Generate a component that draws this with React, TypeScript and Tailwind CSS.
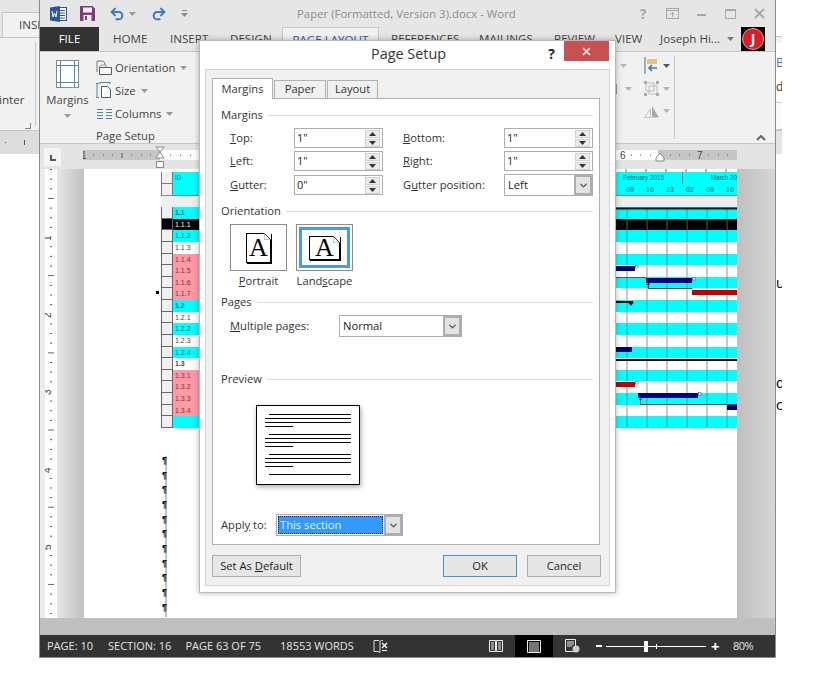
import { ChevronDown, Redo2, Undo2 } from 'lucide-react'

const font = { fontFamily: '"Open Sans", "Noto Sans", sans-serif' }

const rows = [
  { id: '1.1', tone: 'cyan', bold: true },
  { id: '1.1.1', tone: 'black' },
  { id: '1.1.2', tone: 'cyan' },
  { id: '1.1.3', tone: 'white' },
  { id: '1.1.4', tone: 'pink' },
  { id: '1.1.5', tone: 'pink' },
  { id: '1.1.6', tone: 'pink' },
  { id: '1.1.7', tone: 'pink' },
  { id: '1.2', tone: 'cyan', bold: true },
  { id: '1.2.1', tone: 'white' },
  { id: '1.2.2', tone: 'cyan' },
  { id: '1.2.3', tone: 'white' },
  { id: '1.2.4', tone: 'cyan' },
  { id: '1.3', tone: 'white', bold: true },
  { id: '1.3.1', tone: 'pink' },
  { id: '1.3.2', tone: 'pink' },
  { id: '1.3.3', tone: 'pink' },
  { id: '1.3.4', tone: 'pink' },
  { id: '', tone: 'cyan' },
]

const toneClass: Record<string, string> = {
  cyan: 'bg-[#00ffff] text-[#00666c]',
  black: 'bg-black text-white',
  white: 'bg-white text-[#444444]',
  pink: 'bg-[#ff99a4] text-[#7d3040]',
}

function Caret({ className = '' }: { className?: string }) {
  return (
    <svg width="7" height="4" viewBox="0 0 7 4" className={className}>
      <path d="M0 0h7L3.5 4z" fill="currentColor" />
    </svg>
  )
}

function WordIcon() {
  return (
    <svg width="17" height="16" viewBox="0 0 17 16">
      <rect x="6" y="1.5" width="10.5" height="13" fill="#fff" stroke="#2b579a" />
      <path d="M10 4.5h5M10 7h5M10 9.5h5M10 12h5" stroke="#2b579a" />
      <path d="M0 1.5 10 0v16L0 14.5z" fill="#2b579a" />
      <path d="M2 5l1 6 1.5-4 1.5 4 1-6" stroke="#fff" strokeWidth="1" fill="none" />
    </svg>
  )
}

function SaveIcon() {
  return (
    <svg width="15" height="15" viewBox="0 0 15 15">
      <path d="M0 0h12.5L15 2.5V15H0z" fill="#80397b" />
      <rect x="3" y="1.5" width="9" height="5" fill="#f4eef4" />
      <rect x="3.5" y="9" width="8" height="6" fill="#f4eef4" />
      <rect x="5" y="10" width="2" height="4" fill="#80397b" />
    </svg>
  )
}

function MarginsIcon() {
  return (
    <svg width="23" height="28" viewBox="0 0 23 28" className="mx-auto">
      <rect x="0.5" y="0.5" width="22" height="27" fill="#fff" stroke="#7d8b96" />
      <path d="M4.5 1v26M18.5 1v26M1 5.5h21M1 22.5h21" stroke="#4f87a8" />
    </svg>
  )
}

function OrientationIcon() {
  return (
    <svg width="16" height="16" viewBox="0 0 16 16">
      <path d="M1 12V1h6l2 2v2" fill="none" stroke="#777" />
      <path d="M3.5 7.5h12v7h-12z" fill="#fff" stroke="#555" />
      <path d="M3 7l2-2h5v2" fill="none" stroke="#999" />
    </svg>
  )
}

function SizeIcon() {
  return (
    <svg width="16" height="17" viewBox="0 0 16 17">
      <path d="M1 1v15M0 1.5h3M0 15.5h3M4 0.5h10M4 0v2M14 0v2" stroke="#4f87a8" fill="none" />
      <path d="M5.5 4.5h6l3 3v8h-9z" fill="#fff" stroke="#555" />
    </svg>
  )
}

function ColumnsIcon() {
  return (
    <svg width="15" height="12" viewBox="0 0 15 12">
      <path d="M0 1.5h6M0 4.5h6M0 7.5h6M0 10.5h6M9 1.5h6M9 4.5h6M9 7.5h6M9 10.5h6" stroke="#4f87a8" />
    </svg>
  )
}

function RibbonRow({ icon, label }: { icon: React.ReactNode; label: string }) {
  return (
    <div className="flex h-[23px] items-center gap-[3px]">
      <span className="flex w-[16px] justify-center">{icon}</span>
      <span className="text-[11.3px] leading-none text-[#444444]">{label}</span>
      <Caret className="ml-[2px] text-[#999999]" />
    </div>
  )
}

function WindowButtons() {
  return (
    <div className="ml-auto flex h-full items-center text-[#a8a8a8]">
      <span className="w-[12px] text-center text-[14px] font-bold">?</span>
      <svg width="13" height="11" viewBox="0 0 13 11" className="ml-[17px]">
        <rect x="0.5" y="0.5" width="12" height="10" fill="none" stroke="currentColor" />
        <path d="M1 2.5h11M6.5 9V4.5M4.5 6.5l2-2 2 2" fill="none" stroke="currentColor" />
      </svg>
      <svg width="9" height="2" viewBox="0 0 9 2" className="ml-[18px] mt-[2px]">
        <rect width="9" height="2" fill="currentColor" />
      </svg>
      <svg width="11" height="10" viewBox="0 0 11 10" className="ml-[19px]">
        <path d="M0.5 1.5h10v8h-10z" fill="none" stroke="currentColor" />
        <rect width="11" height="2" fill="currentColor" />
      </svg>
      <svg width="11" height="11" viewBox="0 0 11 11" className="ml-[18px] mr-[10px]">
        <path d="M1 1l9 9M10 1l-9 9" stroke="currentColor" strokeWidth="2" />
      </svg>
    </div>
  )
}

function TitleBar() {
  return (
    <div className="flex h-[27px] items-center bg-[#e6e6e6] pl-[10px]">
      <WordIcon />
      <span className="ml-[13px]">
        <SaveIcon />
      </span>
      <Undo2 className="ml-[14px] h-[16px] w-[16px] text-[#3a7cc0]" strokeWidth={3} />
      <Caret className="ml-[4px] text-[#999999]" />
      <Redo2 className="ml-[15px] h-[16px] w-[16px] text-[#3a7cc0]" strokeWidth={3} />
      <span className="ml-[14px] flex flex-col items-center gap-[2px] text-[#888888]">
        <span className="h-px w-[5px] bg-current" />
        <Caret />
      </span>
      <span className="ml-[109px] text-[11.4px] text-[#8d8d8d]">Paper (Formatted, Version 3).docx - Word</span>
      <WindowButtons />
    </div>
  )
}

function TabBar() {
  return (
    <div className="flex h-[24px] items-center whitespace-nowrap bg-[#e6e6e6] text-[11.6px] text-[#444444]">
      <div className="flex h-full w-[59px] items-center justify-center bg-[#333333] text-white">FILE</div>
      <span className="ml-[14px] w-[35px]">HOME</span>
      <span className="ml-[22px] w-[38px]">INSERT</span>
      <span className="ml-[22px] w-[40px]">DESIGN</span>
      <div className="ml-[12px] flex h-full w-[97px] items-center justify-center border border-b-0 border-[#c6c6c6] bg-[#f1f1f1] text-[#2b579a]">
        PAGE LAYOUT
      </div>
      <span className="ml-[12px] w-[67px]">REFERENCES</span>
      <span className="ml-[21px] w-[54px]">MAILINGS</span>
      <span className="ml-[21px] w-[40px]">REVIEW</span>
      <span className="ml-[21px] w-[27px]">VIEW</span>
      <span className="ml-auto">Joseph Hi...</span>
      <Caret className="ml-[7px] text-[#777777]" />
      <div className="ml-[7px] mr-[10px] flex h-full w-[24px] items-center justify-center bg-black">
        <div className="flex h-[22px] w-[22px] items-center justify-center rounded-full border border-[#f0a0a0] bg-[#d81e24] text-[14px] font-bold leading-none text-white">
          J
        </div>
      </div>
    </div>
  )
}

function Ribbon() {
  return (
    <div className="flex h-[93px] border-y border-[#c6c6c6] bg-[#f1f1f1] pt-[4px]">
      <div className="ml-[5px] w-[45px] pt-[4px] text-center">
        <MarginsIcon />
        <div className="mt-[6px] text-[11.3px] leading-none text-[#444444]">Margins</div>
        <Caret className="mx-auto mt-[9px] text-[#999999]" />
      </div>
      <div className="ml-[6px]">
        <RibbonRow icon={<OrientationIcon />} label="Orientation" />
        <RibbonRow icon={<SizeIcon />} label="Size" />
        <RibbonRow icon={<ColumnsIcon />} label="Columns" />
        <div className="mt-[4px] text-[11.3px] leading-[14px] text-[#444444]">Page Setup</div>
      </div>
      <div className="ml-auto flex w-[59px] flex-col gap-[7px] pt-[1px] text-[#b4b4b4]">
        <div className="flex items-center">
          <span className="flex w-[29px] pl-[5px]">
            <Caret />
          </span>
          <svg width="14" height="17" viewBox="0 0 14 17">
            <path d="M1 0v17" stroke="#666" />
            <rect x="3" y="2" width="10" height="5" fill="#e8c27e" />
            <path d="M13 11H5M8 8l-3 3 3 3" fill="none" stroke="#2f74b5" strokeWidth="1.5" />
          </svg>
          <Caret className="ml-[5px] text-[#555555]" />
        </div>
        <div className="flex items-center">
          <span className="flex w-[29px] items-center gap-[8px]">
            <span className="h-[10px] w-[2px] bg-[#999999]" />
            <Caret />
          </span>
          <svg width="15" height="15" viewBox="0 0 15 15">
            <path d="M2 2h8v8H2zM5 5h8v8H5z" fill="none" stroke="#bbb" />
            <path d="M0 0h3v3H0zM12 0h3v3h-3zM0 12h3v3H0zM12 12h3v3h-3z" fill="#aaa" />
          </svg>
          <Caret className="ml-[4px]" />
        </div>
        <div className="flex items-center">
          <span className="w-[29px]" />
          <svg width="15" height="15" viewBox="0 0 15 15">
            <path d="M0.5 14.5 6.5 6v8.5z" fill="#f4f4f4" stroke="#bbb" />
            <path d="M8 3l7 11.5H8z" fill="#aaa" />
          </svg>
          <Caret className="ml-[4px]" />
        </div>
      </div>
      <div className="mb-[4px] w-px bg-[#c6c6c6]" />
      <div className="flex w-[100px] items-end justify-end pb-[2px] pr-[9px]">
        <svg width="10" height="6" viewBox="0 0 10 6">
          <path d="M1 5l4-4 4 4" fill="none" stroke="#666" strokeWidth="2" />
        </svg>
      </div>
    </div>
  )
}

function HorizontalRuler() {
  const dots = [93, 103, 112, 131, 141, 150, 170, 180, 190, 631, 640, 650, 670, 679, 689, 708, 718, 727]
  return (
    <div className="flex h-[25px] items-center bg-[#e4e4e4] pl-[4px]">
      <div className="flex h-[18px] w-[17px] items-center justify-center bg-[#f4f4f4]">
        <div className="h-[6px] w-[6px] translate-y-[1px] border-b-2 border-l-2 border-[#555555]" />
      </div>
      <svg width="654" height="25" viewBox="83 144 654 25" className="ml-[22px]">
        <rect x="83" y="150" width="654" height="10" fill="#c6c6c6" />
        <rect x="160" y="150" width="498" height="10" fill="#fff" />
        <text x="81" y="159" fontSize="10" fill="#444" fontFamily="Liberation Sans">1</text>
        <text x="620" y="159" fontSize="10" fill="#444" fontFamily="Liberation Sans">6</text>
        <text x="697" y="159" fontSize="10" fill="#444" fontFamily="Liberation Sans">7</text>
        {dots.map((x) => (
          <rect key={x} x={x} y="154.5" width="1" height="1" fill="#555" />
        ))}
        <path d="M122 153v5" stroke="#555" />
        <path d="M156 147h8l-4 5 4 6h-8l4-6z" fill="#fff" stroke="#888" />
        <rect x="156.5" y="161.5" width="7" height="6" fill="#fff" stroke="#888" />
        <path d="M660 153l4 5v3h-8v-3z" fill="#fff" stroke="#888" />
      </svg>
    </div>
  )
}

function VerticalRuler() {
  const ticks = Array.from({ length: 47 }, (_, i) => 169.5 + i * 9.65)
  return (
    <svg width="12" height="449" viewBox="45 169 12 449" className="bg-white">
      {ticks.map((y, i) => {
        const mark = Math.round((y - 160) / 9.65)
        if (mark % 8 === 0) return null
        return mark % 4 === 0 ? (
          <path key={i} d={`M48 ${y}h6`} stroke="#666" />
        ) : (
          <path key={i} d={`M50 ${y}h2`} stroke="#555" />
        )
      })}
      {[
        [237, '1'],
        [314, '2'],
        [391, '3'],
        [469, '4'],
        [546, '5'],
      ].map(([y, n]) => (
        <text
          key={n}
          x="47"
          y={y}
          fontSize="10"
          fill="#444"
          fontFamily="Liberation Sans"
          transform={`rotate(-90 51 ${y})`}
        >
          {n}
        </text>
      ))}
    </svg>
  )
}

function GanttBars() {
  return (
    <svg width="121" height="221" viewBox="616 207 121 221" className="absolute right-0 top-[35px]">
      <path d="M627 207v221M647 207v221M667 207v221M687 207v221M707 207v221M727 207v221" stroke="#777" strokeOpacity="0.8" />
      <rect x="616" y="207.5" width="121" height="2" fill="#111" />
      <rect x="616" y="266" width="19" height="5" fill="#000080" />
      <rect x="635.5" y="265.5" width="2.5" height="2.5" fill="#fff" stroke="#555" strokeWidth="0.6" />
      <path d="M616 277.5h30" stroke="#555" />
      <rect x="646" y="278" width="46" height="5" fill="#000080" />
      <rect x="692.5" y="277.5" width="2.5" height="2.5" fill="#fff" stroke="#555" strokeWidth="0.6" />
      <path d="M648.5 283v5.5h44" fill="none" stroke="#444" />
      <path d="M647 285h3l-1.500-2z" fill="#000" />
      <rect x="692" y="290" width="45" height="5" fill="#c00000" />
      <rect x="616" y="301" width="17" height="2" fill="#000" />
      <path d="M628 302h6l-3 4z" fill="#000" />
      <rect x="616" y="347" width="16" height="5" fill="#000080" />
      <rect x="616" y="359" width="121" height="2" fill="#000" />
      <rect x="616" y="382" width="19" height="5" fill="#c00000" />
      <rect x="635.5" y="381.5" width="2.5" height="2.5" fill="#fff" stroke="#555" strokeWidth="0.6" />
      <rect x="638" y="393" width="60" height="5" fill="#000080" />
      <rect x="698.500" y="392.500" width="2.500" height="2.500" fill="#fff" stroke="#555" strokeWidth="0.6" />
      <path d="M640.5 398v6.5H737" fill="none" stroke="#444" />
      <path d="M639 400h3l-1.500-2z" fill="#000" />
      <rect x="727" y="405" width="10" height="5" fill="#000080" />
    </svg>
  )
}

function GanttTable() {
  const tinyFont = { fontFamily: '"Liberation Sans", sans-serif' }
  return (
    <div className="relative ml-[77px] mt-[3px]" style={tinyFont}>
      <svg width="121" height="3" viewBox="616 169 121 3" className="absolute right-0 top-[-3px]">
        <path d="M626 169v3M646 169v3M666 169v3M686 169v3M706 169v3M726 169v3" stroke="#666" />
      </svg>
      <div className="flex h-[24px] border-b border-[#888888] bg-[#00ffff] text-[6.3px] text-[#00666c]">
        <div className="w-[12px] border-x border-[#777777] bg-[#f0f0f0]">
          <div className="mt-[11px] border-t border-[#777777]" />
        </div>
        <div className="pl-[2px] pt-[1px]">ID</div>
        <div className="ml-auto w-[121px] overflow-hidden text-[7px]">
          <div className="flex h-[12px] items-center whitespace-nowrap pl-[7px] text-[6.3px]">
            <span className="w-[60px]">February 2015</span>
            <span className="h-[12px] w-px bg-[#557777]" />
            <span className="ml-[28px]">March 20</span>
          </div>
          <div className="flex h-[12px] items-center pl-[4px]">
            {['09', '16', '23', '02', '09', '16'].map((d, i) => (
              <span key={i} className="w-[20px] shrink-0 text-center">
                {d}
              </span>
            ))}
          </div>
        </div>
      </div>
      <div className="h-[11px] bg-[#eeeeee]" />
      <div className="flex flex-col">
        {rows.map((row, i) => (
          <div key={i} className="flex h-[11.63px] overflow-hidden">
            <div
              className={`w-[12px] border-x border-b border-[#666666] ${row.tone === 'black' ? 'bg-black' : 'bg-[#f0f0f0]'}`}
            />
            <div
              className={`w-[40px] pl-[2px] text-[7px] leading-[11px] ${toneClass[row.tone]} ${row.bold ? 'font-bold' : ''}`}
            >
              {row.id}
            </div>
            <div
              className={`flex-1 ${row.tone === 'black' ? 'bg-black' : i % 2 === 0 ? 'bg-[#00ffff]' : 'bg-white'}`}
            />
          </div>
        ))}
      </div>
      <GanttBars />
      <div className="absolute left-[-5px] top-[119px] h-[3px] w-[3px] bg-black" />
    </div>
  )
}

function Document() {
  return (
    <div className="flex h-[449px]">
      <div className="w-[5px] bg-[#ececec]" />
      <VerticalRuler />
      <div className="w-[27px] bg-gradient-to-r from-[#e6e6e6] to-[#c0c0c0]" />
      <div className="h-full w-[653px] overflow-hidden bg-white">
        <GanttTable />
        <div className="ml-[81px] mt-[28px] flex w-[2px] flex-col bg-[#c4c4c4]">
          {Array.from({ length: 11 }).map((_, i) => (
            <div
              key={i}
              className="ml-[-3px] h-[14.7px] text-[9px] font-bold leading-[9px] text-black"
              style={{ fontFamily: '"Liberation Sans", sans-serif' }}
            >
              ¶
            </div>
          ))}
        </div>
      </div>
      <div className="flex-1 bg-gradient-to-r from-[#bfbfbf] to-[#d6d6d6]" />
    </div>
  )
}

function StatusBar() {
  return (
    <div className="flex h-[22px] items-center bg-[#333333] text-[11px] text-[#e4e4e4]">
      <span className="ml-[7px]">PAGE: 10</span>
      <span className="ml-[15px]">SECTION: 16</span>
      <span className="ml-[14px]">PAGE 63 OF 75</span>
      <span className="ml-[19px]">18553 WORDS</span>
      <svg width="15" height="14" viewBox="0 0 15 14" className="ml-[19px]">
        <path d="M6 1.500H1v11h4l2 1V2.500zM7 2.500c1-1 1.500-1 3-1" fill="none" stroke="#ddd" />
        <path d="M9 4l5 5M14 4l-5 5M9 11.500h5" stroke="#fff" strokeWidth="1.2" />
      </svg>
      <svg width="14" height="14" viewBox="0 0 14 14" className="ml-auto">
        <path d="M0.500 1.500h6v11h-6zM7.500 1.500h6v11h-6zM2 4h3M2 6h3M2 8h3M2 10h3M9 4h3M9 6h3M9 8h3M9 10h3" fill="none" stroke="#eee" />
      </svg>
      <div className="ml-[12px] flex h-[22px] w-[38px] items-center justify-center bg-black">
        <svg width="14" height="13" viewBox="0 0 14 13">
          <path d="M0.500 0.500h13v12h-13zM2 3h10M2 5h10M2 7h10M2 9h10M2 11h10" fill="none" stroke="#eee" />
        </svg>
      </div>
      <svg width="15" height="14" viewBox="0 0 15 14" className="ml-[12px]">
        <path d="M0.500 0.500h10v12h-10zM2 3h7M2 5h7M2 7h5" fill="none" stroke="#eee" />
        <circle cx="11" cy="10" r="3.500" fill="#ccc" />
      </svg>
      <span className="ml-[16px] h-[2px] w-[6px] bg-white" />
      <div className="relative ml-[4px] h-px w-[100px] bg-white">
        <span className="absolute left-[38px] top-[-5px] h-[11px] w-[4px] bg-white" />
        <span className="absolute left-[50px] top-[-2px] h-[5px] w-px bg-white" />
      </div>
      <span className="ml-[5px] w-[8px] text-center text-[15px] font-bold leading-none text-white">+</span>
      <span className="ml-[14px] mr-[20px] w-[22px] tracking-[-0.5px]">80%</span>
    </div>
  )
}

function Spinner() {
  return (
    <div className="mr-[2px] flex w-[15px] flex-col gap-px text-[#333333]">
      <span className="flex h-[8px] items-center justify-center border border-[#d0d0d0] bg-[#ececec]">
        <Caret className="rotate-180" />
      </span>
      <span className="flex h-[8px] items-center justify-center border border-[#d0d0d0] bg-[#ececec]">
        <Caret />
      </span>
    </div>
  )
}

function NumberField({ value }: { value: string }) {
  return (
    <div className="flex h-[20px] items-center border border-[#adadad] bg-white pl-[2px] text-[11px] text-[#222222]">
      <span className="flex-1">{value}</span>
      <Spinner />
    </div>
  )
}

function SelectField({ value, className = '', active = false }: { value: string; className?: string; active?: boolean }) {
  return (
    <div className={`flex h-[22px] items-stretch border border-[#adadad] bg-white text-[11.2px] text-[#222222] ${className}`}>
      {active ? (
        <div className="m-px flex flex-1 items-center border border-dotted border-[#222222] bg-[#3399ff] pl-[1px] text-[#eaf4ff]">
          {value}
        </div>
      ) : (
        <span className="flex flex-1 items-center pl-[3px]">{value}</span>
      )}
      <span className="flex w-[18px] items-center justify-center border-2 border-[#adadad] bg-[#e3e3e3]">
        <ChevronDown className="h-[11px] w-[11px] text-[#555555]" strokeWidth={3} />
      </span>
    </div>
  )
}

function Heading({ label }: { label: string }) {
  return (
    <div className="flex h-[16px] items-center gap-[5px] pr-[6px]">
      <span className="text-[11.2px] leading-none text-[#333333]">{label}</span>
      <span className="h-px flex-1 bg-[#dcdcdc]" />
    </div>
  )
}

function PageGlyph({ landscape = false }: { landscape?: boolean }) {
  return (
    <div
      className={`relative flex items-center justify-center border border-black bg-white shadow-[1px_1px_0_#000] ${landscape ? 'h-[24px] w-[31px]' : 'h-[30px] w-[25px]'}`}
    >
      <span className="text-[26px] leading-none text-black" style={{ fontFamily: '"Liberation Serif", serif' }}>
        A
      </span>
      <svg width="7" height="7" viewBox="0 0 7 7" className="absolute right-[-1px] top-[-1px]">
        <path d="M0 0h7v7z" fill="#fff" />
        <path d="M0 0l7 7" stroke="#000" strokeWidth="0.8" />
        <path d="M0.500 0v6.500H7" fill="none" stroke="#999" strokeWidth="0.6" />
      </svg>
    </div>
  )
}

function PreviewPage() {
  const group = (last: boolean, key: number) => (
    <div key={key} className="flex flex-col gap-[3px]">
      <span className="ml-[4px] h-px bg-black" />
      {!last && <span className="h-px bg-black" />}
      {!last && <span className="h-px bg-black" />}
      {!last && <span className="h-px w-[28px] bg-black" />}
    </div>
  )
  return (
    <div className="ml-[35px] mt-[18px] flex h-[80px] w-[104px] flex-col gap-[7px] border border-black bg-white py-[8px] pl-[8px] pr-[8px] shadow-[1px_2px_5px_rgba(0,0,0,0.35)]">
      {[false, false, false, true].map((last, i) => group(last, i))}
    </div>
  )
}

function MarginsPanel() {
  return (
    <div className="h-[447px] border border-[#b0b0b0] bg-white pl-[8px] pt-[8px] text-[11.2px] text-[#333333]">
      <Heading label="Margins" />
      <div className="mt-[5px] grid grid-cols-[64px_89px_20px_101px_89px] items-center gap-y-[3px] pl-[9px]">
        <span><u>T</u>op:</span>
        <NumberField value={'1"'} />
        <span />
        <span><u>B</u>ottom:</span>
        <NumberField value={'1"'} />
        <span><u>L</u>eft:</span>
        <NumberField value={'1"'} />
        <span />
        <span><u>R</u>ight:</span>
        <NumberField value={'1"'} />
        <span><u>G</u>utter:</span>
        <NumberField value={'0"'} />
        <span />
        <span>G<u>u</u>tter position:</span>
        <SelectField value="Left" />
      </div>
      <div className="mt-[7px]">
        <Heading label="Orientation" />
      </div>
      <div className="mt-[5px] flex gap-[9px] pl-[9px]">
        <div className="flex w-[57px] flex-col items-center">
          <div className="flex h-[47px] w-[57px] items-center justify-center border border-[#8c8c8c]">
            <PageGlyph />
          </div>
          <span className="mt-[2px] leading-[16px]"><u>P</u>ortrait</span>
        </div>
        <div className="flex w-[57px] flex-col items-center">
          <div className="flex h-[47px] w-[57px] items-center justify-center border border-[#8c8c8c] p-[2px]">
            <div className="flex h-full w-full items-center justify-center border-[3px] border-[#4a9ae0]">
              <PageGlyph landscape />
            </div>
          </div>
          <span className="mt-[2px] leading-[16px]">Land<u>s</u>cape</span>
        </div>
      </div>
      <div className="mt-[5px]">
        <Heading label="Pages" />
      </div>
      <div className="mt-[5px] flex items-center pl-[9px]">
        <span className="w-[109px]"><u>M</u>ultiple pages:</span>
        <SelectField value="Normal" className="w-[123px]" />
      </div>
      <div className="mt-[34px]">
        <Heading label="Preview" />
      </div>
      <PreviewPage />
      <div className="mt-[29px] flex items-center">
        <span className="w-[55px]">Appl<u>y</u> to:</span>
        <SelectField value="This section" active className="w-[127px]" />
      </div>
    </div>
  )
}

function DialogButton({ children, className = '' }: { children: React.ReactNode; className?: string }) {
  return (
    <div className={`flex h-[22px] shrink-0 items-center justify-center border bg-[#e6e6e6] text-[11.2px] text-[#222222] ${className}`}>
      {children}
    </div>
  )
}

function PageSetupDialog() {
  return (
    <div className="absolute left-[199px] top-[40px] flex h-[553px] w-[417px] flex-col border border-[#b9b9b9] bg-white shadow-[0_0_6px_rgba(0,0,0,0.3)]">
      <div className="relative flex h-[28px] items-center pb-[2px] text-[14.4px] text-[#333333]">
        <span className="ml-[171px]">Page Setup</span>
        <span className="ml-auto mr-[9px] text-[14px] font-bold leading-none text-[#222222]">?</span>
        <div className="mr-[6px] flex h-[20px] w-[45px] items-center justify-center self-start bg-[#c75050]">
          <svg width="9" height="9" viewBox="0 0 9 9">
            <path d="M1 1l7 7M8 1L1 8" stroke="#fff" strokeWidth="1.6" />
          </svg>
        </div>
      </div>
      <div className="mx-[5px] flex h-[517px] flex-col border border-[#d4d4d4] bg-[#f0f0f0] pl-[6px] pr-[9px] pt-[7px]">
        <div className="flex h-[21px] items-end text-[11.2px] text-[#333333]">
          <div className="relative z-10 flex h-[21px] w-[61px] translate-y-px items-center justify-center border border-b-0 border-[#b0b0b0] bg-white">
            Margins
          </div>
          <div className="ml-px flex h-[18px] w-[52px] items-center justify-center border border-b-0 border-[#b0b0b0]">
            Paper
          </div>
          <div className="ml-px flex h-[18px] w-[51px] items-center justify-center border border-b-0 border-[#b0b0b0]">
            Layout
          </div>
        </div>
        <MarginsPanel />
        <div className="mt-[10px] flex">
          <DialogButton className="w-[89px] border-[#adadad]">
            <span>Set As <u>D</u>efault</span>
          </DialogButton>
          <DialogButton className="ml-[142px] w-[74px] border-[#4a90d0]">OK</DialogButton>
          <DialogButton className="ml-[10px] w-[74px] border-[#adadad]">Cancel</DialogButton>
        </div>
      </div>
    </div>
  )
}

function LeftWindow() {
  return (
    <div className="absolute left-0 top-0 h-[154px] w-[39px] overflow-hidden whitespace-nowrap bg-[#e6e6e6] text-[11.6px] text-[#444444]">
      <div className="ml-[2px] mt-[12px] flex h-[25px] items-center border-l border-t border-[#c6c6c6] bg-[#f1f1f1] pl-[16px]">
        INSE
      </div>
      <div className="relative h-[93px] border-t border-[#c6c6c6] bg-[#f1f1f1]">
        <span className="absolute left-[-1px] top-[53px]">inter</span>
        <span className="absolute left-[35px] top-[4px] h-[84px] w-px bg-[#c6c6c6]" />
        <span className="absolute left-[25px] top-[85px] h-[6px] w-[6px] border-b border-r border-[#888888]" />
      </div>
      <div className="flex h-[24px] items-center gap-[18px] border-t border-[#c6c6c6] bg-[#dcdcdc] pl-[5px] text-[#555555]">
        <span className="h-px w-px bg-current" />
        <span className="h-[5px] w-px bg-current" />
      </div>
    </div>
  )
}

function RightWindow() {
  return (
    <div className="absolute left-[776px] top-0 h-[154px] w-[6px] overflow-hidden text-[12px] leading-none">
      <div className="mt-[36px] h-[7px] border-t border-[#c6c6c6] bg-[#f1f1f1]" />
      <div className="h-[59px] pt-[14px] text-[#3f78b5]">
        Bl
        <div className="mt-[12px] text-[#333333]">d</div>
      </div>
      <div className="h-[27px] border-t border-[#c6c6c6] bg-[#fafafa]" />
      <div className="h-[25px] border-t-2 border-[#c6c6c6] bg-[#e4e4e4]" />
    </div>
  )
}

function CutOffText() {
  return (
    <div className="absolute left-[776px] top-[276px] w-[6px] overflow-hidden text-[14px] leading-none text-black">
      <div>u</div>
      <div className="mt-[86px]">d</div>
      <div className="mt-[8px]">c</div>
    </div>
  )
}

export default function App() {
  return (
    <div className="relative h-[678px] w-[819px] overflow-hidden bg-white" style={font}>
      <LeftWindow />
      <RightWindow />
      <CutOffText />
      <div className="absolute left-[39px] top-0 h-[658px] w-[737px] border-x border-b border-[#8a8a8a]">
        <TitleBar />
        <TabBar />
        <Ribbon />
        <HorizontalRuler />
        <Document />
        <div className="h-[17px] bg-[#bfbfbf]" />
        <StatusBar />
      </div>
      <PageSetupDialog />
    </div>
  )
}
